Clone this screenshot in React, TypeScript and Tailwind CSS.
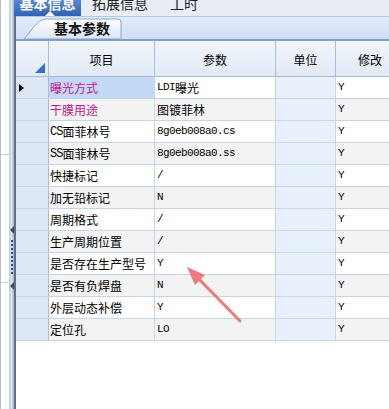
const rows: { name: string; value: string; color?: string }[] = [
  { name: "曝光方式", value: "LDI曝光", color: "text-[#c0168f]" },
  { name: "干膜用途", value: "图镀菲林", color: "text-[#c0168f]" },
  { name: "CS面菲林号", value: "8g0eb008a0.cs" },
  { name: "SS面菲林号", value: "8g0eb008a0.ss" },
  { name: "快捷标记", value: "/" },
  { name: "加无铅标记", value: "N" },
  { name: "周期格式", value: "/" },
  { name: "生产周期位置", value: "/" },
  { name: "是否存在生产型号", value: "Y" },
  { name: "是否有负焊盘", value: "N" },
  { name: "外层动态补偿", value: "Y" },
  { name: "定位孔", value: "LO" },
]

const cjk = "font-['Liberation_Mono','Noto_Sans_CJK_SC',monospace]"
const cn = "font-['Noto_Sans_CJK_SC',sans-serif]"

const App = () => {
  return (
    <div className="relative w-[389px] h-[409px] overflow-hidden flex bg-white text-[12px] text-black">
      {/* left panel edge */}
      <div className="w-[9px] shrink-0 bg-white border-l border-[#b8bfc8] flex flex-col">
        <div className="h-[155px] border-b border-[#c8ced6]" />
        <div className="h-[128px] border-b border-[#c8ced6]" />
      </div>
      {/* splitter */}
      <div className="w-[7px] shrink-0 bg-gradient-to-r from-[#b9c6d6] via-[#dfe6ee] to-[#9eafc4] border-r-2 border-[#5f7088] flex flex-col items-center">
        <div className="h-[226px]" />
        <div className="w-0 h-0 border-y-[4px] border-y-transparent border-r-[4px] border-r-[#3d4d66]" />
        <div className="mt-[6px] h-[36px] w-[2px] bg-[repeating-linear-gradient(to_bottom,#2e4a86_0px,#2e4a86_2px,transparent_2px,transparent_4px)]" />
        <div className="mt-[6px] w-0 h-0 border-y-[4px] border-y-transparent border-r-[4px] border-r-[#3d4d66]" />
      </div>

      <div className="flex-1 min-w-0 flex flex-col">
        {/* top tabs */}
        <div className={`h-[17px] shrink-0 flex items-end bg-[#e8edf5] border-b border-[#b7c7de] ${cn} text-[14px] leading-none`}>
          <div className="relative w-[67px] h-[17px] ml-[-2px] bg-gradient-to-b from-[#5a8ad2] to-[#2f62b3] text-white font-bold flex justify-center overflow-hidden">
            <span className="mt-[-3px]">基本信息</span>
            <div className="absolute bottom-0 left-[31px] w-0 h-0 border-x-[5px] border-x-transparent border-b-[5px] border-b-white" />
          </div>
          <div className="h-[17px] ml-[11px] overflow-hidden text-[#222]">
            <span className="block mt-[-3px]">拓展信息</span>
          </div>
          <div className="h-[17px] ml-[22px] overflow-hidden text-[#222]">
            <span className="block mt-[-3px]">工时</span>
          </div>
        </div>

        {/* sub tabs */}
        <div className="h-[24px] shrink-0 flex items-end bg-gradient-to-b from-[#e3ecf9] to-[#cfdff4] border-b-2 border-[#7f9fd2]">
          <svg width="100" height="21" className="ml-[7px] block">
            <defs>
              <linearGradient id="tabg" x1="0" y1="0" x2="0" y2="1">
                <stop offset="0" stopColor="#ffffff" />
                <stop offset="1" stopColor="#dbe6f5" />
              </linearGradient>
            </defs>
            <path d="M1 21 C8 14 12 5 19 2 Q21 1 24 1 L95 1 Q98 1 98 4 L98 21 Z" fill="url(#tabg)" stroke="#8aa4cc" strokeWidth="1" />
            <text x="59" y="15.5" textAnchor="middle" fontSize="14" fontWeight="bold" fontFamily="Noto Sans CJK SC, sans-serif" fill="#111">基本参数</text>
          </svg>
        </div>

        {/* grid */}
        <div className="flex-1 flex flex-col overflow-hidden">
          <div className={`h-[36px] shrink-0 flex bg-gradient-to-b from-[#f1f5fb] to-[#e2eaf6] border-b border-[#a8bcd8] ${cn}`}>
            <div className="relative w-[33px] shrink-0 border-r border-[#a8bcd8]">
              <div className="absolute right-[3px] bottom-[3px] w-0 h-0 border-l-[10px] border-l-transparent border-b-[10px] border-b-[#3a6fc8]" />
            </div>
            <div className="w-[106px] shrink-0 border-r border-[#a8bcd8] flex items-center justify-center pt-[2px]">项目</div>
            <div className="w-[121px] shrink-0 border-r border-[#a8bcd8] flex items-center justify-center pt-[2px]">参数</div>
            <div className="w-[60px] shrink-0 border-r border-[#a8bcd8] flex items-center justify-center pt-[2px]">单位</div>
            <div className="w-[62px] shrink-0 flex items-center justify-center pt-[2px] pl-[6px]">修改</div>
          </div>
          {rows.map((r, i) => (
            <div key={r.name} className={`h-[22px] shrink-0 flex border-b border-[#c4d5ec] ${i % 2 ? "bg-[#f3f3f3]" : "bg-white"}`}>
              <div className="w-[33px] shrink-0 bg-[#dde8f6] border-r border-[#a8bcd8] flex items-center pl-[3px]">
                {i === 0 && <div className="w-0 h-0 border-y-[4px] border-y-transparent border-l-[5px] border-l-black" />}
              </div>
              <div className={`w-[106px] shrink-0 border-r border-[#c4d5ec] pl-[1px] flex items-center whitespace-nowrap overflow-hidden ${cn} ${r.color ?? ""} ${i === 0 ? "bg-[#c3d9f5]" : ""}`}>
                {r.name.match(/^[A-Z]+/) ? (
                  <>
                    <span className="font-['Liberation_Mono',monospace] text-[12px] tracking-[-1px]">{r.name.match(/^[A-Z]+/)![0]}</span>
                    {r.name.replace(/^[A-Z]+/, "")}
                  </>
                ) : (
                  r.name
                )}
              </div>
              <div className={`w-[121px] shrink-0 border-r border-[#c4d5ec] pl-[2px] flex items-center whitespace-nowrap overflow-hidden ${cjk} text-[11px] tracking-[-0.6px]`}>
                {r.value.split(/([\u4e00-\u9fff]+)/).map((part, k) =>
                  /[\u4e00-\u9fff]/.test(part) ? (
                    <span key={k} className={`${cn} text-[12px] tracking-normal`}>{part}</span>
                  ) : (
                    <span key={k}>{part}</span>
                  )
                )}
              </div>
              <div className="w-[60px] shrink-0 border-r border-[#c4d5ec] bg-[#e8f0fb]" />
              <div className={`w-[62px] shrink-0 pl-[2px] flex items-center ${cjk} text-[11px]`}>Y</div>
            </div>
          ))}
        </div>
      </div>

      {/* annotation arrow */}
      <svg className="absolute left-0 top-0 pointer-events-none" width="389" height="409">
        <line x1="240" y1="321" x2="196" y2="276" stroke="#ef7a7a" strokeWidth="3" strokeLinecap="round" />
        <polygon points="187,267 205,275 195,285" fill="#ef7a7a" />
      </svg>
    </div>
  )
}

export default App
